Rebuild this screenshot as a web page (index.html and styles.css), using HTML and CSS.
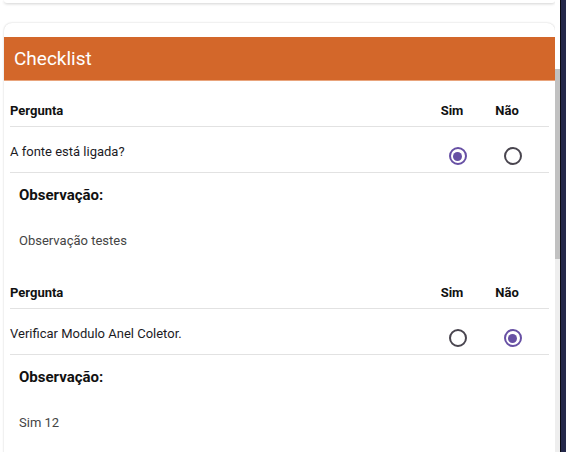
FILE: index.html
```html
<!DOCTYPE html>
<html lang="pt">
<head>
<meta charset="utf-8">
<title>Checklist</title>
<link rel="stylesheet" href="styles.css">
</head>
<body>
<div class="page">
  <div class="prev-card"></div>
  <div class="card">
    <div class="card-title">Checklist</div>
    <div class="card-body">
      <div class="q">
        <div class="q-head">
          <div class="q-label">Pergunta</div>
          <div class="col">Sim</div>
          <div class="col">Não</div>
        </div>
        <div class="q-row">
          <div class="q-text">A fonte está ligada?</div>
          <div class="cell"><span class="radio checked"></span></div>
          <div class="cell"><span class="radio"></span></div>
        </div>
        <div class="obs">
          <div class="obs-label">Observação:</div>
          <div class="obs-text">Observação testes</div>
        </div>
      </div>
      <div class="q">
        <div class="q-head">
          <div class="q-label">Pergunta</div>
          <div class="col">Sim</div>
          <div class="col">Não</div>
        </div>
        <div class="q-row">
          <div class="q-text">Verificar Modulo Anel Coletor.</div>
          <div class="cell"><span class="radio"></span></div>
          <div class="cell"><span class="radio checked"></span></div>
        </div>
        <div class="obs">
          <div class="obs-label">Observação:</div>
          <div class="obs-text">Sim 12</div>
        </div>
      </div>
    </div>
  </div>
</div>
<div class="scrollbar">
  <div class="sb-top"></div>
  <div class="sb-thumb"></div>
  <div class="sb-track"></div>
</div>
<div class="edge"></div>
</body>
</html>
```
FILE: styles.css
```css
* { box-sizing: border-box; }
html, body { margin: 0; padding: 0; }
body {
  width: 566px;
  height: 452px;
  overflow: hidden;
  display: flex;
  background: #ffffff;
  font-family: Roboto, "Noto Sans", "Liberation Sans", sans-serif;
  color: #1c1b1f;
}
.page {
  width: 555px;
  height: 452px;
  overflow: hidden;
  flex: none;
}
.prev-card {
  height: 3px;
  width: 551px;
  margin-left: 4px;
  background: #fff;
  border-radius: 0 0 8px 8px;
  box-shadow: 0 1px 3px rgba(0,0,0,0.18);
}
.card {
  margin: 20px 0 0 4px;
  width: 551px;
  background: #fff;
  border-radius: 8px 8px 0 0;
  box-shadow: 0 0 2px rgba(0,0,0,0.22);
  padding: 14px 0 60px;
}
.card-title {
  height: 44px;
  line-height: 44px;
  background: #d3672a;
  color: #fff;
  font-size: 19px;
  padding-left: 10px;
  border-bottom: 1px solid #e9a47c;
}
.card-body {
  padding: 0 6px;
}
.q-head {
  display: flex;
  padding: 22px 9px 7px 0;
  border-bottom: 1px solid #e2e2e2;
  font-size: 13px;
  font-weight: 700;
  line-height: 16px;
  color: #111;
}
.q-label { flex: 1; }
.col {
  width: 55px;
  text-align: center;
  padding-right: 11px;
}
.q-row {
  display: flex;
  height: 46px;
  padding-right: 9px;
  border-bottom: 1px solid #e2e2e2;
}
.q-text {
  flex: 1;
  padding-top: 17px;
  font-size: 13px;
  line-height: 16px;
  color: #1c1b1f;
}
.cell {
  width: 55px;
  display: flex;
  justify-content: center;
  padding-top: 20px;
}
.radio {
  width: 18px;
  height: 18px;
  border-radius: 50%;
  border: 2px solid #49454f;
  display: flex;
  align-items: center;
  justify-content: center;
}
.radio.checked {
  border-color: #6750a4;
}
.radio.checked::after {
  content: "";
  width: 9px;
  height: 9px;
  border-radius: 50%;
  background: #6750a4;
}
.obs {
  height: 90px;
  padding: 12px 0 0 9px;
}
.obs-label {
  font-size: 15px;
  font-weight: 700;
  line-height: 20px;
  color: #111;
}
.obs-text {
  margin-top: 28px;
  font-size: 13px;
  line-height: 16px;
  color: #444;
}
.scrollbar {
  width: 5px;
  flex: none;
  display: flex;
  flex-direction: column;
}
.sb-top { height: 69px; background: #fff; }
.sb-thumb { height: 190px; background: #c1c1c1; }
.sb-track { flex: 1; background: #eeeeee; }
.edge {
  flex: 1;
  background: #24284a;
  border-left: 1px solid #0c0c14;
}
```
